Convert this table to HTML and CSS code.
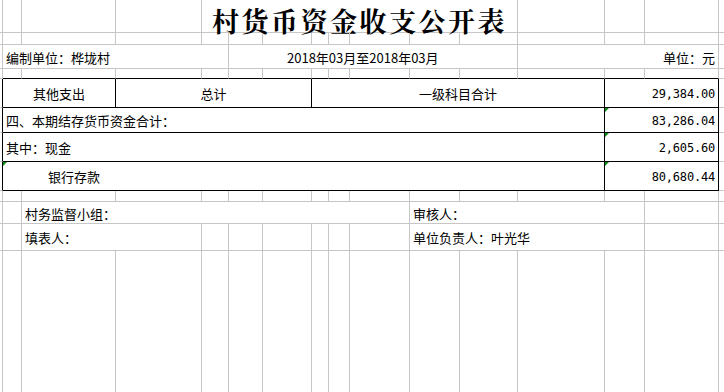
FILE: index.html
```html
<!DOCTYPE html>
<html lang="zh-CN">
<head>
<meta charset="utf-8">
<title>村货币资金收支公开表</title>
<link rel="stylesheet" href="styles.css">
</head>
<body>
<div class="sheet">
  <!-- row 1: title -->
  <div class="c"></div><div class="c"></div><div class="c"></div><div class="c"></div>
  <div class="c s8 title">村货币资金收支公开表</div>
  <div class="c"></div><div class="c"></div><div class="c"></div><div class="c nr"></div>

  <!-- row 2 -->
  <div class="c"></div><div class="c"></div><div class="c"></div><div class="c"></div>
  <div class="c"></div><div class="c"></div><div class="c"></div><div class="c"></div>
  <div class="c"></div><div class="c"></div><div class="c"></div><div class="c"></div>
  <div class="c"></div><div class="c"></div><div class="c"></div><div class="c nr"></div>

  <!-- row 3 -->
  <div class="c"></div>
  <div class="c s4 l">编制单位：桦垅村</div>
  <div class="c s7 date">2018年03月至2018年03月</div>
  <div class="c s3 r">单位：元</div>
  <div class="c nr"></div>

  <!-- row 4 -->
  <div class="c"></div><div class="c kb"></div><div class="c kb"></div><div class="c kb"></div>
  <div class="c kb"></div><div class="c kb"></div><div class="c kb"></div><div class="c kb"></div>
  <div class="c kb"></div><div class="c kb"></div><div class="c kb"></div><div class="c kb"></div>
  <div class="c kb"></div><div class="c kb"></div><div class="c kb"></div><div class="c nr"></div>

  <!-- row 5: header -->
  <div class="c kr"></div>
  <div class="c s2 kr kb m">其他支出</div>
  <div class="c s4 kr kb m">总计</div>
  <div class="c s6 kr kb m">一级科目合计</div>
  <div class="c s2 kr kb r num">29,384.00</div>
  <div class="c nr"></div>

  <!-- row 6 -->
  <div class="c kr"></div>
  <div class="c s12 kr kb l">四、本期结存货币资金合计：</div>
  <div class="c s2 kr kb r num flag">83,286.04</div>
  <div class="c nr"></div>

  <!-- row 7 -->
  <div class="c kr"></div>
  <div class="c s12 kr kb l">其中：现金</div>
  <div class="c s2 kr kb r num flag">2,605.60</div>
  <div class="c nr"></div>

  <!-- row 8 -->
  <div class="c kr"></div>
  <div class="c s12 kr kb l indent flag">银行存款</div>
  <div class="c s2 kr kb r num flag">80,680.44</div>
  <div class="c nr"></div>

  <!-- row 9 -->
  <div class="c"></div><div class="c"></div><div class="c"></div><div class="c"></div>
  <div class="c"></div><div class="c"></div><div class="c"></div><div class="c"></div>
  <div class="c"></div><div class="c"></div><div class="c"></div><div class="c"></div>
  <div class="c"></div><div class="c"></div><div class="c"></div><div class="c nr"></div>

  <!-- row 10 -->
  <div class="c"></div><div class="c"></div>
  <div class="c s8 l">村务监督小组：</div>
  <div class="c s4 l">审核人：</div>
  <div class="c"></div><div class="c nr"></div>

  <!-- row 11 -->
  <div class="c"></div><div class="c"></div>
  <div class="c s2 l">填表人：</div>
  <div class="c"></div><div class="c"></div><div class="c"></div><div class="c"></div>
  <div class="c"></div><div class="c"></div>
  <div class="c s4 l">单位负责人：叶光华</div>
  <div class="c"></div><div class="c nr"></div>

  <!-- row 12 -->
  <div class="c nb"></div><div class="c nb"></div><div class="c nb"></div><div class="c nb"></div>
  <div class="c nb"></div><div class="c nb"></div><div class="c nb"></div><div class="c nb"></div>
  <div class="c nb"></div><div class="c nb"></div><div class="c nb"></div><div class="c nb"></div>
  <div class="c nb"></div><div class="c nb"></div><div class="c nb"></div><div class="c nb nr"></div>
</div>
</body>
</html>
```

FILE: styles.css
```css
html, body {
  margin: 0;
  padding: 0;
  background: #ffffff;
}

body {
  width: 724px;
  height: 392px;
  overflow: hidden;
  font-family: "Noto Sans CJK SC", "Noto Sans", sans-serif;
  font-size: 13px;
  color: #000000;
}

.sheet {
  display: grid;
  grid-template-columns: 3px 19px 94px 86px 27px 34px 49px 17px 21px 60px 50px 58px 87px 40px 74px 5px;
  grid-template-rows: 33px 12px 24px 10px 29px 25px 29px 29px 11px 22px 27px 141px;
  width: 724px;
}

.c {
  box-sizing: border-box;
  border-right: 1px solid #c6c6c6;
  border-bottom: 1px solid #c6c6c6;
  display: flex;
  align-items: center;
  white-space: nowrap;
  min-width: 0;
  line-height: 1;
  padding-top: 1px;
  position: relative;
}

.s2 { grid-column: span 2; }
.s3 { grid-column: span 3; }
.s4 { grid-column: span 4; }
.s6 { grid-column: span 6; }
.s7 { grid-column: span 7; }
.s8 { grid-column: span 8; }
.s12 { grid-column: span 12; }

.nr { border-right: 0; }
.nb { border-bottom: 0; }
.kr { border-right-color: #000000; }
.kb { border-bottom-color: #000000; }

.l { padding-left: 3px; }
.r { justify-content: flex-end; padding-right: 3px; }
.m { justify-content: center; }

.indent { padding-left: 45px; }

.date { padding-left: 58px; }

.num {
  font-family: "DejaVu Sans Mono", "Liberation Mono", monospace;
  font-size: 12px;
  letter-spacing: -0.2px;
}

.title {
  justify-content: center;
  align-items: flex-start;
  padding-top: 7px;
  font-family: "Noto Serif CJK SC", "Noto Sans CJK SC", serif;
  font-weight: 700;
  font-size: 27px;
  letter-spacing: 2.5px;
  line-height: 1;
}

.flag::before {
  content: "";
  position: absolute;
  top: 0;
  left: 0;
  width: 0;
  height: 0;
  border-top: 4px solid #0e8a0e;
  border-right: 4px solid transparent;
}
```
